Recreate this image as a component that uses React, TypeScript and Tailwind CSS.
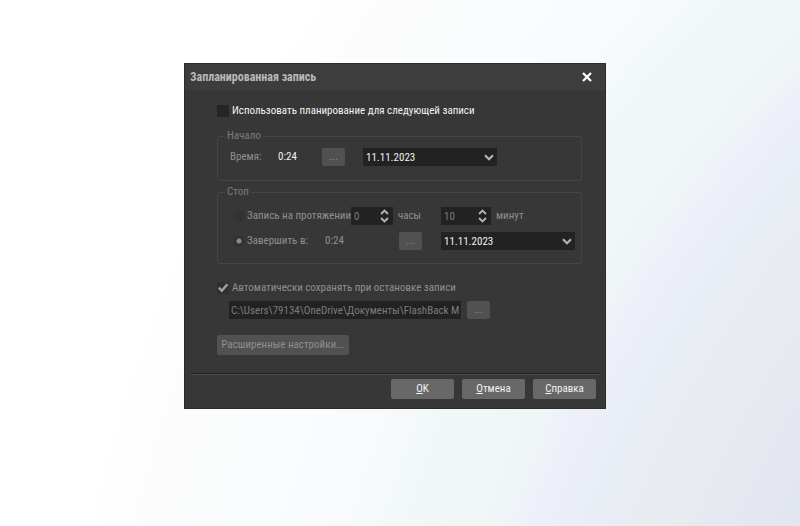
import type { ReactNode } from "react";

function Chevron({ className = "" }: { className?: string }) {
  return (
    <svg viewBox="0 0 10 7" className={className} fill="none" stroke="currentColor" strokeWidth="2.2" aria-hidden="true">
      <path d="M1 1.2 L5 5.2 L9 1.2" />
    </svg>
  );
}

function DateSelect({ label }: { label: string }) {
  return (
    <div className="relative w-[134px]">
      <select
        aria-label={label}
        className="block h-[18px] w-full appearance-none bg-[#222222] pt-px pl-[3px] text-[#f2f2f2] outline-none"
      >
        <option>11.11.2023</option>
      </select>
      <Chevron className="pointer-events-none absolute top-[6px] right-[3px] h-[7px] w-[10px] text-[#b4b4b4]" />
    </div>
  );
}

function Spinner({ label, value, className }: { label: string; value: number; className: string }) {
  return (
    <div className={`relative h-[18px] shrink-0 bg-[#222222] ${className}`}>
      <input
        type="number"
        aria-label={label}
        defaultValue={value}
        className="block h-full w-full appearance-none bg-transparent pl-[3px] text-[#7c7c7c] outline-none [appearance:textfield] [&::-webkit-inner-spin-button]:appearance-none"
      />
      <div className="absolute inset-y-0 right-1 flex flex-col justify-between py-[2px] text-[#b4b4b4]">
        <button type="button" aria-label={`${label} +`}>
          <Chevron className="block h-[6px] w-[9px] rotate-180" />
        </button>
        <button type="button" aria-label={`${label} −`}>
          <Chevron className="block h-[6px] w-[9px]" />
        </button>
      </div>
    </div>
  );
}

function MoreButton({ label }: { label: string }) {
  return (
    <button
      type="button"
      aria-label={label}
      className="h-[18px] w-[23px] shrink-0 rounded-xs bg-[#515151] text-[#8c8c8c]"
    >
      ...
    </button>
  );
}

function ActionButton({ children }: { children: ReactNode }) {
  return (
    <button type="button" className="h-5 w-[63px] rounded-xs bg-[#686868] text-[#f2f2f2]">
      {children}
    </button>
  );
}

function StopOption({ label, checked = false }: { label: string; checked?: boolean }) {
  return (
    <label className="flex shrink-0 items-center gap-[2px] whitespace-nowrap">
      <input
        type="radio"
        name="stop"
        defaultChecked={checked}
        className="size-3 appearance-none rounded-full bg-[#323232] checked:bg-[radial-gradient(circle,#8a8a8a_0_2px,#323232_3px)]"
      />
      {label}
    </label>
  );
}

export default function App() {
  return (
    <main className="flex min-h-screen items-start justify-center bg-[radial-gradient(circle_at_198%_167%,#e1e5ee_857px,#e5e8f0_920px,#e8ebef_985px,#e9edf5_1060px,#edf0f9_1110px,#f0f6f6_1145px,#f2f8f8_1234px,#f8fafb_1290px,#fafdfe_1390px,#fcfcfc_1470px,#ffffff_1543px)] pt-[63px] pr-[10px] pb-8 font-['Roboto_Condensed','DejaVu_Sans_Condensed',sans-serif] text-[11px] leading-[14px] text-[#8f8f8f]">
      <form className="w-[422px] border border-[#2c2c2c] bg-[#373737]">
        <header className="flex h-[26px] items-center justify-between bg-[#3d3d3d] pr-[13px] pl-[5px]">
          <h1 className="text-xs font-bold text-[#b8b8b8]">Запланированная запись</h1>
          <button type="button" aria-label="Закрыть" className="text-white">
            <svg viewBox="0 0 10 10" className="block size-[10px]" stroke="currentColor" strokeWidth="2.2" aria-hidden="true">
              <path d="M1 1 L9 9 M9 1 L1 9" />
            </svg>
          </button>
        </header>

        <div className="pt-[14px] pr-[23px] pl-8">
          <label className="flex items-center gap-[3px] text-[#f2f2f2]">
            <input type="checkbox" className="size-3 appearance-none bg-[#252525]" />
            Использовать планирование для следующей записи
          </label>

          <fieldset className="mt-[11px] rounded-[3px] border border-[#464646] px-3 pb-[14px]">
            <legend className="ml-[-5px] px-[2px] text-[#7c7c7c]">Начало</legend>
            <div className="mt-[5px] flex items-center">
              <span className="w-12">Время:</span>
              <span className="w-11 text-[#f2f2f2]">0:24</span>
              <MoreButton label="Выбрать время начала" />
              <div className="ml-[18px]">
                <DateSelect label="Дата начала" />
              </div>
            </div>
          </fieldset>

          <fieldset className="mt-1 rounded-[3px] border border-[#464646] pr-[6px] pb-[13px] pl-[15px]">
            <legend className="ml-[-8px] px-[2px] text-[#7c7c7c]">Стоп</legend>
            <div className="mt-2 flex items-center">
              <StopOption label="Запись на протяжении" />
              <Spinner label="Часы" value={0} className="w-[42px]" />
              <span className="ml-[5px] grow">часы</span>
              <Spinner label="Минуты" value={10} className="w-[50px]" />
              <span className="ml-[5px] w-[79px]">минут</span>
            </div>
            <div className="mt-[7px] flex items-center">
              <StopOption label="Завершить в:" checked />
              <span className="ml-[17px] grow">0:24</span>
              <MoreButton label="Выбрать время остановки" />
              <div className="ml-[19px]">
                <DateSelect label="Дата остановки" />
              </div>
            </div>
          </fieldset>

          <label className="mt-[17px] flex items-center gap-[3px]">
            <span className="relative size-3">
              <input type="checkbox" defaultChecked className="peer block size-3 appearance-none bg-[#303030]" />
              <svg
                viewBox="0 0 12 12"
                className="pointer-events-none invisible absolute inset-0 size-3 text-[#a0a0a0] peer-checked:visible"
                fill="none"
                stroke="currentColor"
                strokeWidth="2.4"
                aria-hidden="true"
              >
                <path d="M1.8 5.6 L4.8 8.8 L10.4 2.2" />
              </svg>
            </span>
            Автоматически сохранять при остановке записи
          </label>
          <div className="mt-[6px] flex items-start gap-[6px] pl-3">
            <input
              type="text"
              aria-label="Путь к файлу"
              defaultValue="C:\Users\79134\OneDrive\Документы\FlashBack Movies"
              className="h-[18px] w-[232px] bg-[#222222] px-[2px] text-[#7c7c7c] outline-none"
            />
            <MoreButton label="Выбрать папку" />
          </div>
          <button type="button" className="mt-4 h-5 w-[132px] rounded-xs bg-[#515151] whitespace-nowrap text-[#8f8f8f]">
            Расширенные настройки...
          </button>
        </div>

        <footer className="mx-[5px] mt-[18px] flex justify-end gap-2 border-t border-[#242424] pt-[5px] pr-1 pb-[9px] shadow-[inset_0_1px_0_#4a4a4a]">
          <ActionButton>
            <u>O</u>K
          </ActionButton>
          <ActionButton>
            <u>О</u>тмена
          </ActionButton>
          <ActionButton>
            <u>С</u>правка
          </ActionButton>
        </footer>
      </form>
    </main>
  );
}
